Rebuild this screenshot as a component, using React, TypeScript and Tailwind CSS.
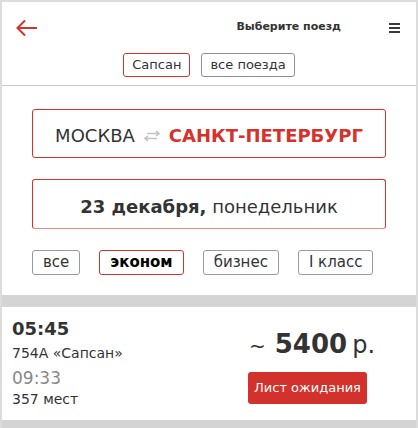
const RED = "#d5322b";

function BackArrow() {
	return (
		<svg width="22" height="18" viewBox="0 0 22 18" fill="none">
			<path d="M21 9H2M9 1.5L1.5 9L9 16.5" stroke="#d5322b" strokeWidth="2" />
		</svg>
	);
}

function SwapArrows() {
	return (
		<svg width="18" height="12" viewBox="0 0 18 12" fill="none" stroke="#c2c2c2" strokeWidth="1.6">
			<path d="M4 3.5H16M13 1L16 3.5L13 6" />
			<path d="M14 8.5H2M5 6L2 8.5L5 11" />
		</svg>
	);
}

export default function App() {
	const classes = ["все", "эконом", "бизнес", "I класс"];

	return (
		<div
			className="w-[418px] h-[428px] overflow-hidden bg-white border-x-2 border-t-2 border-[#dcdcdc] text-[#333]"
			style={{ fontFamily: 'Verdana, "DejaVu Sans", sans-serif' }}
		>
			{/* шапка */}
			<div className="h-[51px] flex items-center pl-[14px]">
				<BackArrow />
				<div className="flex-1" />
				<div className="text-[11px] font-bold">Выберите поезд</div>
				<div className="ml-[48px] mr-[16px] flex flex-col gap-[2px]">
					<div className="w-[11px] h-[2px] bg-[#3a3a3a]" />
					<div className="w-[11px] h-[2px] bg-[#3a3a3a]" />
					<div className="w-[11px] h-[2px] bg-[#3a3a3a]" />
				</div>
			</div>

			{/* вкладки */}
			<div className="flex justify-center gap-[11px] pb-[8px] border-b border-[#c8c8c8]">
				<button
					type="button"
					className="h-[24px] px-[8px] text-[13px] rounded-[3px] border border-[#d5322b] bg-white"
				>
					Сапсан
				</button>
				<button
					type="button"
					className="h-[24px] px-[8px] text-[13px] rounded-[3px] border border-[#8f8f8f] bg-white"
				>
					все поезда
				</button>
			</div>

			{/* маршрут */}
			<div className="mx-[30px] mt-[23px] h-[49px] pt-[4px] flex items-center justify-center gap-[8px] rounded-[3px] border border-[#d5322b] text-[18px]">
				<span>МОСКВА</span>
				<SwapArrows />
				<span className="font-bold" style={{ color: RED }}>
					САНКТ-ПЕТЕРБУРГ
				</span>
			</div>

			{/* дата */}
			<div className="mx-[30px] mt-[21px] h-[50px] pt-[4px] flex items-center justify-center rounded-[3px] border border-[#d5322b] border-b-[#e58a84] text-[18px]">
				<span className="font-bold">23 декабря,</span>
				<span>&nbsp;понедельник</span>
			</div>

			{/* классы */}
			<div className="mx-[30px] mt-[21px] flex gap-[19px]">
				{classes.map((c) => (
					<button
						key={c}
						type="button"
						className={`h-[25px] px-[10px] text-[15px] rounded-[3px] border bg-white ${
							c === "эконом" ? "border-[#d5322b] font-bold text-black" : "border-[#999]"
						}`}
					>
						{c}
					</button>
				))}
			</div>

			<div className="mt-[20px] h-[12px] bg-[#d4d4d4]" />

			{/* поезд */}
			<div className="flex pt-[11px] pb-[12px] pl-[10px]">
				<div className="flex-1">
					<div className="text-[18px] leading-[22px] font-bold">05:45</div>
					<div className="text-[14px] leading-[26px]">754А «Сапсан»</div>
					<div className="text-[17px] leading-[24px] text-[#888]">09:33</div>
					<div className="text-[14px] leading-[18px]">357 мест</div>
				</div>
				<div className="w-[119px] mr-[49px] pt-[11px]">
					<div className="flex items-baseline leading-[30px] whitespace-nowrap">
						<span className="text-[20px] ml-[1px]">~</span>
						<span className="text-[26px] font-bold ml-[9px]">5400</span>
						<span className="text-[24px] ml-[5px]">р.</span>
					</div>
					<button
						type="button"
						className="mt-[11px] w-[119px] h-[32px] rounded-[3px] text-white text-[13px]"
						style={{ backgroundColor: "#d3312b" }}
					>
						Лист ожидания
					</button>
				</div>
			</div>

			<div className="h-[12px] bg-[#d4d4d4]" />
		</div>
	);
}
